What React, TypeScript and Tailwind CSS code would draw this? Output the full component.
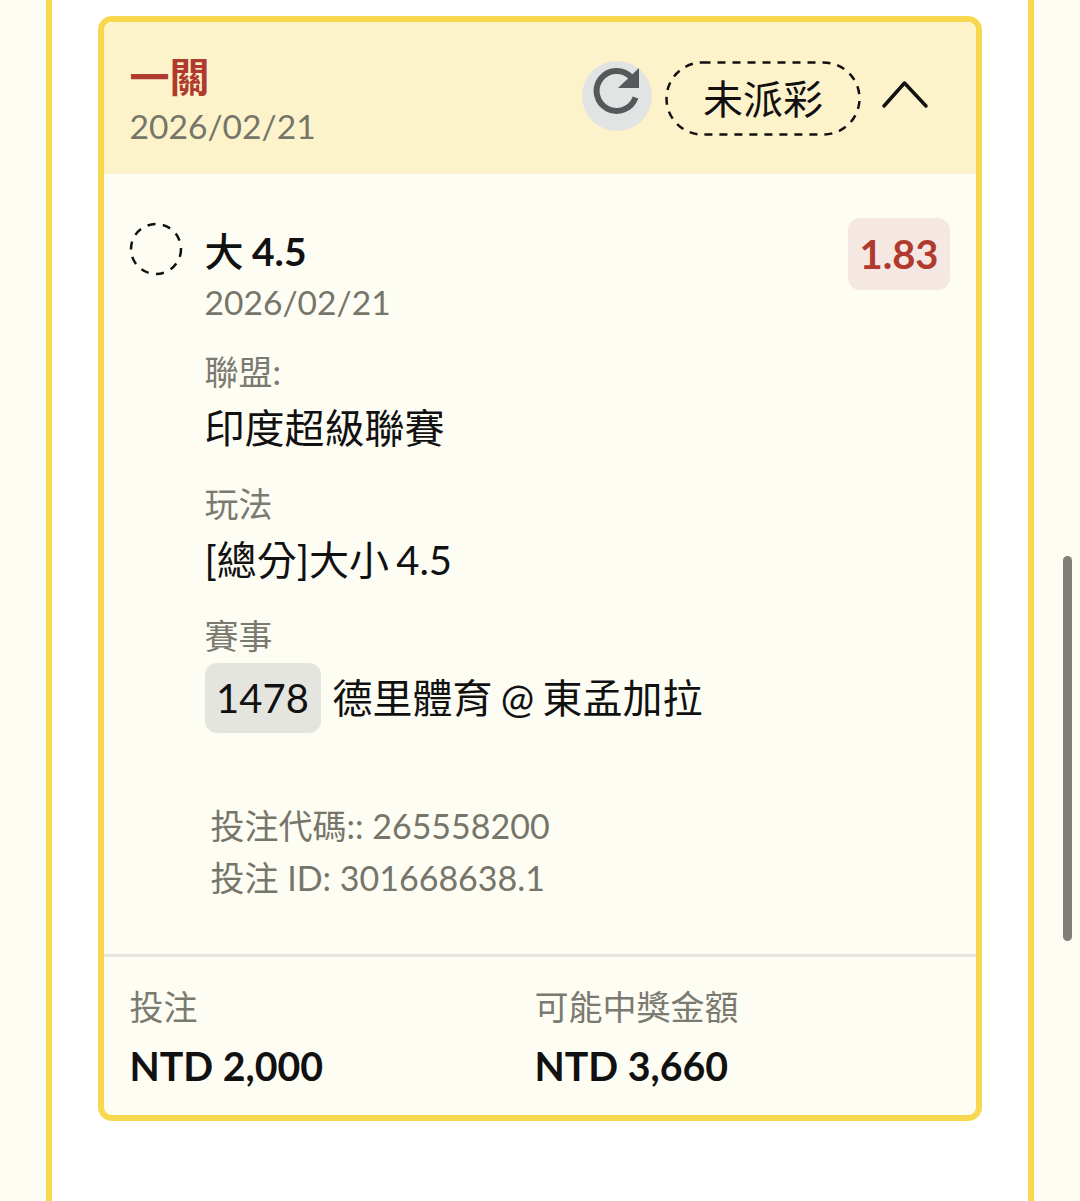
import { FC } from "react";

const FONT = "[font-family:Lato,'Noto_Sans_CJK_TC',sans-serif]";

const ReloadIcon: FC = () => (
  <svg className="ml-[9px] mt-[5px]" width="50" height="50" viewBox="0 0 50 50" fill="none">
    <path d="M44.500 31.500A20 20 0 1 1 40 11" stroke="#56585c" strokeWidth="6" fill="none" />
    <path d="M48 2v20H27z" fill="#56585c" />
  </svg>
);

const Field: FC<{ label: string; value: string; className?: string }> = ({ label, value, className }) => (
  <div className={className}>
    <div className="text-[34px] leading-[44px] text-[#7b7a70]">{label}</div>
    <div className="text-[40px] leading-[52px] text-[#111] mt-[8px] [word-spacing:-3px]">{value}</div>
  </div>
);

export default function App() {
  return (
    <div className={`${FONT} relative h-[1201px] w-[1080px] overflow-hidden bg-[#fefdf4]`}>
      <div className="mx-[46px] h-full border-x-[6px] border-[#f8d84f] bg-white px-[46px] pt-[16px]">
        <div className="h-[1105px] overflow-hidden rounded-[14px] border-[6px] border-[#f8d84f] bg-[#fefdf4] flex flex-col">
          {/* header */}
          <div className="h-[152px] shrink-0 bg-[#fdf3cb] pl-[25.500px] pr-[47px] flex items-start justify-between">
            <div className="pt-[30px]">
              <div className="text-[40px] leading-[50px] font-bold text-[#b03a2e]">一關</div>
              <div className="text-[33.600px] leading-[46px] text-[#76756a] mt-[1px]">2026/02/21</div>
            </div>
            <div className="flex items-start pt-[39px]">
              <div className="h-[70px] w-[70px] rounded-full bg-[#e2e3e3] flex items-start justify-start">
                <ReloadIcon />
              </div>
              <div className="ml-[13px] h-[75px] w-[196px] flex items-center justify-center text-[40px] text-[#111] relative">
                <svg className="absolute inset-0" width="196" height="75" viewBox="0 0 196 75" fill="none">
                  <rect x="1.500" y="1.500" width="193" height="72" rx="36" stroke="#111" strokeWidth="2.500" strokeDasharray="8 7" />
                </svg>
                未派彩
              </div>
              <svg className="ml-[20px] mt-[16px]" width="48" height="32" viewBox="0 0 48 32" fill="none">
                <path d="M3 29 23.500 6 45 29" stroke="#111" strokeWidth="3.500" strokeLinecap="round" strokeLinejoin="round" />
              </svg>
            </div>
          </div>

          {/* body */}
          <div className="h-[783px] shrink-0 border-b-[3px] border-[#e6e6df] pl-[25px] pr-[26px] pt-[44px] flex">
            <svg className="shrink-0 mt-[4px]" width="54" height="54" viewBox="0 0 54 54" fill="none">
              <circle cx="27" cy="27" r="25" stroke="#111" strokeWidth="2.500" strokeDasharray="8 7.500" />
            </svg>
            <div className="ml-[21.500px] flex-1">
              <div className="flex justify-between items-start">
                <div>
                  <div className="text-[39px] leading-[50px] font-bold text-[#111] mt-[8px] [word-spacing:-1px]">
                    <span className="font-medium">大</span> 4.5
                  </div>
                  <div className="text-[33.600px] leading-[46px] text-[#76756a] mt-[3px]">2026/02/21</div>
                </div>
                <div className="h-[72px] w-[102px] rounded-[12px] bg-[#f5e8e2] flex items-center justify-center text-[40px] font-bold text-[#b03a2e]">
                  1.83
                </div>
              </div>
              <Field label="聯盟:" value="印度超級聯賽" className="mt-[25px]" />
              <Field label="玩法" value="[總分]大小 4.5" className="mt-[28px]" />
              <div className="mt-[28px]">
                <div className="text-[34px] leading-[44px] text-[#7b7a70]">賽事</div>
                <div className="mt-[5px] flex items-center">
                  <div className="h-[70px] w-[116px] rounded-[12px] bg-[#e5e5e0] flex items-center justify-center text-[40px] text-[#111]">
                    1478
                  </div>
                  <div className="ml-[12px] text-[40px] text-[#111] [word-spacing:-2px]">德里體育 @ 東孟加拉</div>
                </div>
              </div>
              <div className="mt-[67px] pl-[6px] text-[34px] leading-[52px] text-[#76756a]">
                <div>投注代碼:: 265558200</div>
                <div>投注 ID: 301668638.1</div>
              </div>
            </div>
          </div>

          {/* footer */}
          <div className="flex-1 pl-[25.500px] pt-[28px] flex">
            <div className="w-[405px]">
              <div className="text-[34px] leading-[44px] text-[#7b7a70]">投注</div>
              <div className="text-[39.300px] leading-[50px] font-bold text-[#111] mt-[12px]">NTD 2,000</div>
            </div>
            <div>
              <div className="text-[34px] leading-[44px] text-[#7b7a70]">可能中獎金額</div>
              <div className="text-[39.300px] leading-[50px] font-bold text-[#111] mt-[12px]">NTD 3,660</div>
            </div>
          </div>
        </div>
      </div>
      {/* scrollbar */}
      <div className="absolute left-[1063px] top-[556px] h-[385px] w-[9px] rounded-full bg-[#7f7f78]" />
    </div>
  );
}
